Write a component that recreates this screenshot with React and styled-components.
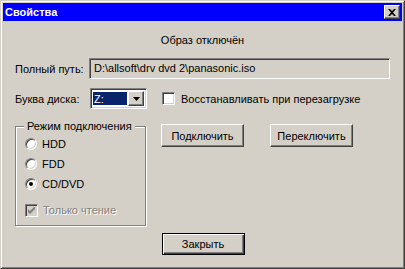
import React from "react";
import styled, { createGlobalStyle, css } from "styled-components";

const Global = createGlobalStyle`
  html, body { margin: 0; padding: 0; background: #d4d0c8; }
  body { font-family: "Liberation Sans", Arial, sans-serif; font-size: 11px; color: #000; }
  * { box-sizing: border-box; }
`;

const raised = css`
  border: 1px solid;
  border-color: #ffffff #404040 #404040 #ffffff;
  box-shadow: inset -1px -1px 0 #808080, inset 1px 1px 0 #d4d0c8;
  background: #d4d0c8;
`;

const sunken = css`
  border: 1px solid;
  border-color: #808080 #ffffff #ffffff #808080;
  box-shadow: inset 1px 1px 0 #404040, inset -1px -1px 0 #d4d0c8;
`;

const Window = styled.div`
  width: 405px;
  height: 269px;
  display: flex;
  flex-direction: column;
  background: #d4d0c8;
  border: 1px solid;
  border-color: #d4d0c8 #404040 #404040 #d4d0c8;
  box-shadow: inset 1px 1px 0 #ffffff, inset -1px -1px 0 #808080;
  padding: 2px;
`;

const TitleBar = styled.div`
  height: 18px;
  background: #0000ff;
  display: flex;
  align-items: center;
  justify-content: space-between;
  padding: 0 2px 0 2px;
  color: #fff;
  font-weight: bold;
  font-size: 11px;
`;

const CloseBtn = styled.div`
  ${raised};
  width: 16px;
  height: 14px;
  display: flex;
  align-items: center;
  justify-content: center;
`;

const Body = styled.div`
  flex: 1;
  display: flex;
  flex-direction: column;
  padding: 0 12px;
`;

const Status = styled.div`
  margin-top: 13px;
  height: 13px;
  line-height: 13px;
  text-align: center;
`;

const Row = styled.div`
  display: flex;
  align-items: center;
  margin-top: ${(p) => p.$mt}px;
  height: 21px;
`;

const Label = styled.span`
  width: ${(p) => p.$w}px;
  flex: none;
  white-space: nowrap;
`;

const TextField = styled.div`
  ${sunken};
  width: 301px;
  height: 21px;
  background: #d4d0c8;
  padding: 3px 4px;
  line-height: 13px;
  white-space: nowrap;
  overflow: hidden;
`;

const Combo = styled.div`
  ${sunken};
  width: 57px;
  height: 21px;
  background: #fff;
  display: flex;
  padding: 2px;
  gap: 1px;
`;

const ComboValue = styled.div`
  flex: 1;
  background: #0a246a;
  color: #fff;
  line-height: 15px;
  padding-left: 1px;
  margin: 1px 0;
`;

const ComboArrow = styled.div`
  ${raised};
  width: 16px;
  display: flex;
  align-items: center;
  justify-content: center;
`;

const CheckBox = styled.div`
  ${sunken};
  width: 13px;
  height: 13px;
  flex: none;
  background: ${(p) => (p.$disabled ? "#d4d0c8" : "#fff")};
  display: flex;
  align-items: center;
  justify-content: center;
`;

const CheckRow = styled.label`
  display: flex;
  align-items: center;
  gap: 6px;
  margin-left: 15px;
`;

const Middle = styled.div`
  display: flex;
  margin-top: 10px;
  align-items: flex-start;
`;

const Group = styled.div`
  position: relative;
  margin-top: 7px;
  width: 131px;
  height: 100px;
  border: 1px solid #808080;
  box-shadow: inset 1px 1px 0 #fff, 1px 1px 0 #fff;
  padding: 10px 0 0 9px;
  display: flex;
  flex-direction: column;
`;

const Legend = styled.span`
  position: absolute;
  top: -7px;
  left: 8px;
  padding: 0 3px;
  background: #d4d0c8;
  line-height: 13px;
  white-space: nowrap;
`;

const Option = styled.div`
  display: flex;
  align-items: center;
  gap: 5px;
  height: 14px;
  margin-bottom: 6px;
  color: ${(p) => (p.$disabled ? "#808080" : "#000")};
  text-shadow: ${(p) => (p.$disabled ? "1px 1px 0 #fff" : "none")};
  margin-top: ${(p) => p.$mt || 0}px;
`;

const Radio = styled.div`
  width: 12px;
  height: 12px;
  flex: none;
  border-radius: 50%;
  background: #fff;
  border: 1px solid;
  border-color: #808080 #fff #fff #808080;
  box-shadow: inset 1px 1px 0 #404040, inset -1px -1px 0 #d4d0c8;
  display: flex;
  align-items: center;
  justify-content: center;
  &::after {
    content: "";
    width: 4px;
    height: 4px;
    border-radius: 50%;
    background: ${(p) => (p.$checked ? "#000" : "transparent")};
  }
`;

const Buttons = styled.div`
  display: flex;
  gap: 26px;
  margin-left: 15px;
  margin-top: 5px;
`;

const Button = styled.div`
  ${raised};
  width: 83px;
  height: 23px;
  display: flex;
  align-items: center;
  justify-content: center;
  white-space: nowrap;
  ${(p) =>
    p.$default &&
    css`
      border: 1px solid #000;
      box-shadow: inset 1px 1px 0 #fff, inset -1px -1px 0 #404040,
        inset -2px -2px 0 #808080;
      height: 22px;
    `}
`;

const Footer = styled.div`
  display: flex;
  justify-content: center;
  margin-top: 7px;
  padding-left: 1px;
`;

const Check = ({ color }) => (
  <svg width="7" height="7" viewBox="0 0 7 7">
    <path d="M0 2v3l2 2l5-5v-3l-5 5z" fill={color} />
  </svg>
);

export default function App() {
  return (
    <>
      <Global />
      <Window>
        <TitleBar>
          <span>Свойства</span>
          <CloseBtn>
            <svg width="8" height="7" viewBox="0 0 8 7">
              <path
                d="M0 0h2l2 2l2-2h2l-3 3.5l3 3.5h-2l-2-2l-2 2h-2l3-3.5z"
                fill="#000"
              />
            </svg>
          </CloseBtn>
        </TitleBar>
        <Body>
          <Status>Образ отключён</Status>
          <Row $mt={11}>
            <Label $w={74}>Полный путь:</Label>
            <TextField>D:\allsoft\drv dvd 2\panasonic.iso</TextField>
          </Row>
          <Row $mt={9}>
            <Label $w={75}>Буква диска:</Label>
            <Combo>
              <ComboValue>Z:</ComboValue>
              <ComboArrow>
                <svg width="7" height="4" viewBox="0 0 7 4">
                  <path d="M0 0h7l-3.5 4z" fill="#000" />
                </svg>
              </ComboArrow>
            </Combo>
            <CheckRow>
              <CheckBox />
              <span>Восстанавливать при перезагрузке</span>
            </CheckRow>
          </Row>
          <Middle>
            <Group>
              <Legend>Режим подключения</Legend>
              <Option>
                <Radio />
                <span>HDD</span>
              </Option>
              <Option>
                <Radio />
                <span>FDD</span>
              </Option>
              <Option>
                <Radio $checked />
                <span>CD/DVD</span>
              </Option>
              <Option $disabled $mt={6}>
                <CheckBox $disabled>
                  <Check color="#808080" />
                </CheckBox>
                <span>Только чтение</span>
              </Option>
            </Group>
            <Buttons>
              <Button>Подключить</Button>
              <Button>Переключить</Button>
            </Buttons>
          </Middle>
          <Footer>
            <Button $default>Закрыть</Button>
          </Footer>
        </Body>
      </Window>
    </>
  );
}
